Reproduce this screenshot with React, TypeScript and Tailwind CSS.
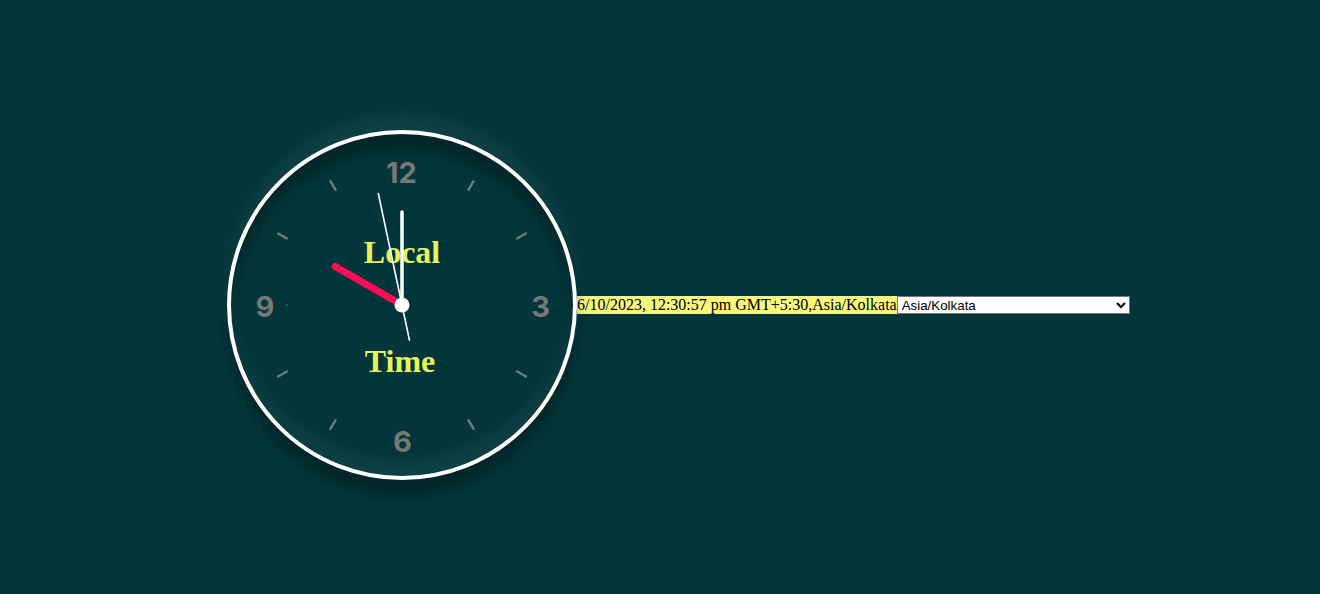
import React from "react";

const CX = 171;
const CY = 171;

function polar(r: number, deg: number) {
  const a = ((deg - 90) * Math.PI) / 180;
  return { x: CX + r * Math.cos(a), y: CY + r * Math.sin(a) };
}

function Hand({ angle, length, tail, width, color }: { angle: number; length: number; tail: number; width: number; color: string }) {
  const tip = polar(length, angle);
  const back = polar(tail, angle + 180);
  return (
    <line
      x1={back.x}
      y1={back.y}
      x2={tip.x}
      y2={tip.y}
      stroke={color}
      strokeWidth={width}
      strokeLinecap="round"
    />
  );
}

const numbers = [
  { label: "12", x: 170.5, y: 49 },
  { label: "3", x: 309.5, y: 183 },
  { label: "6", x: 171.5, y: 318 },
  { label: "9", x: 34, y: 183 },
];

function Clock() {
  const ticks = [1, 2, 4, 5, 7, 8, 10, 11];
  return (
    <div className="relative w-[350px] h-[350px] shrink-0 rounded-full border-4 border-white bg-[#03363a] shadow-[0_-15px_15px_rgba(255,255,255,0.05),0_15px_15px_rgba(0,0,0,0.3),inset_0_-15px_15px_rgba(255,255,255,0.05),inset_0_15px_15px_rgba(0,0,0,0.3)]">
      <svg className="absolute inset-0" width="342" height="342" viewBox="0 0 342 342">
        {ticks.map((t) => {
          const a = polar(132, t * 30);
          const b = polar(144, t * 30);
          return (
            <line key={t} x1={a.x} y1={a.y} x2={b.x} y2={b.y} stroke="#6f7a7a" strokeWidth={2.5} />
          );
        })}
        {numbers.map((n) => (
          <text
            key={n.label}
            x={n.x}
            y={n.y}
            textAnchor="middle"
            fill="#777777"
            fontSize="29"
            fontWeight="700"
            fontFamily="Inter, 'Open Sans', sans-serif"
          >
            {n.label}
          </text>
        ))}
        <circle cx={56} cy={171} r={0.8} fill="#5c8a8a" />
        <text x={171} y={129} textAnchor="middle" fill="#e6f35b" fontSize="32" fontWeight="700" fontFamily="'Liberation Serif', 'Times New Roman', serif">
          Local
        </text>
        <text x={169} y={238} textAnchor="middle" fill="#e6f35b" fontSize="32" fontWeight="700" fontFamily="'Liberation Serif', 'Times New Roman', serif">
          Time
        </text>
        <Hand angle={-60} length={77} tail={0} width={7} color="#ff0d57" />
        <Hand angle={0} length={93} tail={0} width={3.5} color="#ffffff" />
        <Hand angle={-12} length={114} tail={36} width={1.6} color="#ffffff" />
        <circle cx={CX} cy={CY} r={7.5} fill="#ffffff" />
      </svg>
    </div>
  );
}

export default function App() {
  return (
    <div className="min-h-screen bg-[#03363a] pt-[130px] pl-[227px]">
      <div className="flex items-center">
        <Clock />
        <span className="bg-[#f7f77b] text-black text-[16px] leading-[18px] font-['Liberation_Serif','Times_New_Roman',serif] whitespace-nowrap">
          6/10/2023, 12:30:57 pm GMT+5:30,Asia/Kolkata
        </span>
        <select
          defaultValue="Asia/Kolkata"
          className="w-[233px] h-[18px] bg-white text-black text-[13.33px] border border-[#767676] font-['Liberation_Sans',Arial,sans-serif]"
        >
          <option value="Asia/Kolkata">Asia/Kolkata</option>
          <option value="UTC">UTC</option>
          <option value="America/New_York">America/New_York</option>
          <option value="Europe/London">Europe/London</option>
        </select>
      </div>
    </div>
  );
}
